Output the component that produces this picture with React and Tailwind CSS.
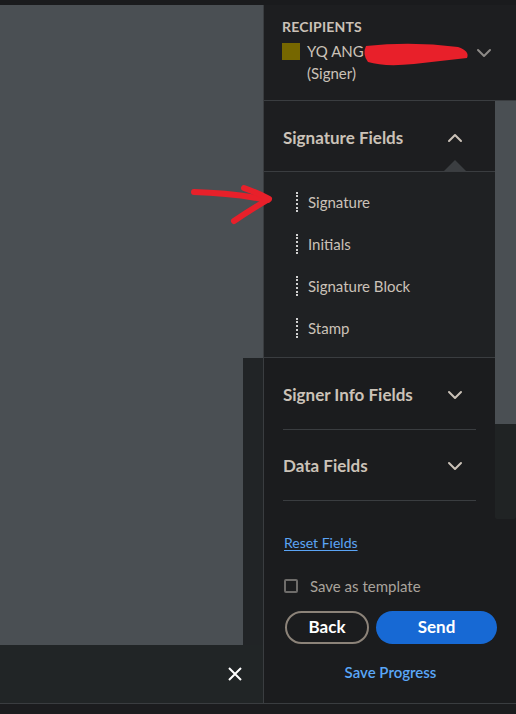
import React from "react";

const Chevron = ({ up = false, className = "" }) => (
  <svg width="16" height="10" viewBox="0 0 16 10" className={className}>
    <path
      d={up ? "M2 8 L8 2 L14 8" : "M2 2 L8 8 L14 2"}
      fill="none"
      stroke="currentColor"
      strokeWidth="2"
      strokeLinecap="round"
      strokeLinejoin="round"
    />
  </svg>
);

const fieldItems = ["Signature", "Initials", "Signature Block", "Stamp"];

export default function App() {
  return (
    <div
      className="relative w-[516px] h-[714px] bg-[#1b1c1e] flex flex-col overflow-hidden"
      style={{ fontFamily: "Lato, 'Open Sans', sans-serif" }}
    >
      <div className="h-[5px] bg-[#1a1b1d]" />

      <div className="flex h-[698px]">
        {/* left document area */}
        <div className="w-[263px] flex flex-col">
          <div className="flex flex-1">
            <div className="w-[243px] bg-[#4a4f53]" />
            <div className="w-[20px] flex flex-col">
              <div className="h-[353px] bg-[#4a4f53]" />
              <div className="flex-1 bg-[#212426]" />
            </div>
          </div>
          <div className="h-[58px] bg-[#212526] flex items-center justify-end pr-[20px]">
            <svg width="16" height="16" viewBox="0 0 16 16">
              <path d="M2 2 L14 14 M14 2 L2 14" stroke="#ffffff" strokeWidth="2" />
            </svg>
          </div>
        </div>

        {/* right panel */}
        <div className="w-[253px] border-l border-[#3a3d40] bg-[#1b1c1e] flex flex-col">
          <div className="h-[96px] border-b border-[#3a3d40] bg-[#1d1e20] pl-[18px] pr-[24px] pt-[11px]">
            <div className="text-[14px] font-bold text-[#cbc2b8] tracking-[0.2px]">RECIPIENTS</div>
            <div className="flex items-start mt-[3px]">
              <div className="w-[18px] h-[17px] bg-[#766700] mt-[3px]" />
              <div className="ml-[7px] flex-1 text-[15px] leading-[22px] text-[#cbc2b8]">
                <div>YQ ANG</div>
                <div>(Signer)</div>
              </div>
              <Chevron className="text-[#8d8a87] mt-[8px]" />
            </div>
          </div>

          <div className="flex h-[418px]">
            <div className="w-[231px] overflow-hidden">
              <div className="h-[70px] relative bg-[#1d1e20]">
                <div className="flex items-center justify-between h-full pl-[19px] pr-[32px] pt-[3px]">
                  <span className="text-[17px] font-bold text-[#cbc2b8]">Signature Fields</span>
                  <Chevron up className="text-[#cbc2b8]" />
                </div>
                <div className="absolute bottom-0 left-[180px] w-0 h-0 border-l-[11px] border-r-[11px] border-b-[11px] border-l-transparent border-r-transparent border-b-[#3b3e41]" />
              </div>
              <div className="border-y border-[#3a3d40] bg-[#1f2123] pt-[9px] pb-[8px]">
                {fieldItems.map((item) => (
                  <div key={item} className="h-[42px] flex items-center pl-[32px]">
                    <div className="h-[20px] border-l-2 border-dotted border-[#d0d0d0]" />
                    <span className="ml-[10px] text-[15px] text-[#cbc2b8]">{item}</span>
                  </div>
                ))}
              </div>
              <div className="h-[72px] mx-[19px] border-b border-[#3a3d40]">
                <div className="flex items-center justify-between h-full pr-[13px] pt-[3px]">
                  <span className="text-[17px] font-bold text-[#cbc2b8]">Signer Info Fields</span>
                  <Chevron className="text-[#cbc2b8]" />
                </div>
              </div>
              <div className="h-[71px] mx-[19px] border-b border-[#3a3d40]">
                <div className="flex items-center justify-between h-full pr-[13px] pt-[2px]">
                  <span className="text-[17px] font-bold text-[#cbc2b8]">Data Fields</span>
                  <Chevron className="text-[#cbc2b8]" />
                </div>
              </div>
            </div>
            <div className="w-[21px] flex flex-col">
              <div className="h-[323px] bg-[#4a4f53]" />
              <div className="flex-1 bg-[#202324] rounded-b-[2px]" />
            </div>
          </div>

          <div className="pl-[20px] pr-[19px]">
            <div className="mt-[13px] text-[14px] text-[#5ba4f5] underline underline-offset-2">Reset Fields</div>
            <div className="mt-[22px] flex items-center">
              <div className="w-[14px] h-[14px] border-2 border-[#6e6c6a] rounded-[2px]" />
              <span className="ml-[12px] text-[15px] text-[#a9a39c]">Save as template</span>
            </div>
            <div className="mt-[13px] flex gap-[7px] pl-[1px]">
              <div className="w-[84px] h-[33px] rounded-full border-2 border-[#8c8379] flex items-center justify-center text-[17px] font-bold text-white">
                Back
              </div>
              <div className="w-[121px] h-[33px] rounded-full bg-[#1769d4] flex items-center justify-center text-[17px] font-bold text-white">
                Send
              </div>
            </div>
            <div className="mt-[17px] text-center text-[15px] font-semibold text-[#5aa7f8]">Save Progress</div>
          </div>
        </div>
      </div>

      <div className="flex-1 border-t border-[#3a3d40] bg-[#1b1c1e]" />

      {/* red annotations */}
      <svg className="absolute inset-0 pointer-events-none" width="516" height="714" viewBox="0 0 516 714">
        <path
          d="M366 46 Q 412 41 458 47 Q 470 51 467 58 Q 440 61 414 64 Q 384 67 368 62 Q 362 54 366 46 Z"
          fill="#e8202a"
        />
        <path d="M194 192 Q 232 193 268 200" fill="none" stroke="#e8202a" strokeWidth="6" strokeLinecap="round" />
        <path
          d="M244 188 Q 258 193 269 199 Q 250 210 234 221"
          fill="none"
          stroke="#e8202a"
          strokeWidth="6"
          strokeLinecap="round"
          strokeLinejoin="round"
        />
      </svg>
    </div>
  );
}
